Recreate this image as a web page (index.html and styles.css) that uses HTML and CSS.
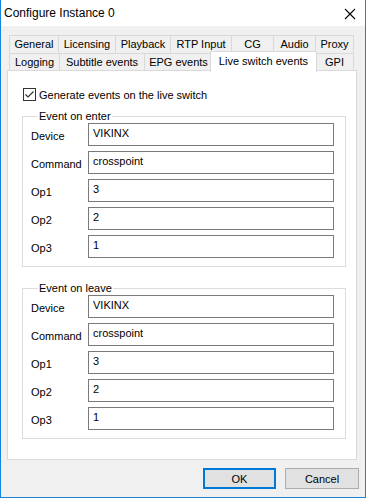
FILE: index.html
```html
<html>
    <head>
        <title>Configure Instance 0</title>
        <link rel="stylesheet" href="styles.css">
    </head>
    <body>
        <div class="window">
            <div class="titlebar">
                <span class="title">Configure Instance 0</span>
                <svg class="close" width="12" height="12" viewBox="0 0 12 12">
                    <path d="M1 1 L11 11 M11 1 L1 11" stroke="#000" stroke-width="1.1" fill="none"/>
                </svg>
            </div>
            <div class="content">
                <div class="tabs">
                    <div class="tabrow first">
                        <div class="tab">General</div>
                        <div class="tab">Licensing</div>
                        <div class="tab">Playback</div>
                        <div class="tab">RTP Input</div>
                        <div class="tab">CG</div>
                        <div class="tab">Audio</div>
                        <div class="tab">Proxy</div>
                    </div>
                    <div class="tabrow second">
                        <div class="tab">Logging</div>
                        <div class="tab">Subtitle events</div>
                        <div class="tab">EPG events</div>
                        <div class="tab selected">Live switch events</div>
                        <div class="tab">GPI</div>
                    </div>
                </div>
                <div class="panel">
                    <label class="check">
                        <svg class="box" width="13" height="13" viewBox="0 0 13 13">
                            <rect x="0.5" y="0.5" width="12" height="12" fill="#fff" stroke="#333"/>
                            <path d="M2.5 6.5 L5 9 L10.5 3.5" stroke="#333" stroke-width="1.2" fill="none"/>
                        </svg>
                        Generate events on the live switch
                    </label>
                    <fieldset class="group">
                        <legend>Event on enter</legend>
                        <div class="field"><span>Device</span><input value="VIKINX"></div>
                        <div class="field"><span>Command</span><input value="crosspoint"></div>
                        <div class="field"><span>Op1</span><input value="3"></div>
                        <div class="field"><span>Op2</span><input value="2"></div>
                        <div class="field"><span>Op3</span><input value="1"></div>
                    </fieldset>
                    <fieldset class="group">
                        <legend>Event on leave</legend>
                        <div class="field"><span>Device</span><input value="VIKINX"></div>
                        <div class="field"><span>Command</span><input value="crosspoint"></div>
                        <div class="field"><span>Op1</span><input value="3"></div>
                        <div class="field"><span>Op2</span><input value="2"></div>
                        <div class="field"><span>Op3</span><input value="1"></div>
                    </fieldset>
                </div>
                <div class="buttons">
                    <button class="default">OK</button>
                    <button>Cancel</button>
                </div>
            </div>
        </div>
    </body>
</html>
```

FILE: styles.css
```css
body
{
    margin: 0;
    font-family: "Liberation Sans", Arial, sans-serif;
    font-size: 11px;
    color: #000000;
}

.window
{
    width: 366px;
    height: 498px;
    box-sizing: border-box;
    border: 1px solid #1883d7;
    border-top: none;
    background-color: #f0f0f0;
    display: flex;
    flex-direction: column;
}

.titlebar
{
    height: 26px;
    flex: none;
    background-color: #ffffff;
    display: flex;
    align-items: center;
    justify-content: space-between;
    padding-left: 3px;
    padding-right: 9px;
}

.title
{
    font-size: 12px;
    margin-top: -1px;
}

.close
{
    margin-top: 1px;
}

.content
{
    padding: 9px 8px 8px 6px;
    display: flex;
    flex-direction: column;
}

.tabs
{
    margin-left: 2px;
}

.tabrow
{
    display: grid;
    height: 18px;
}

.tabrow.first
{
    grid-template-columns: 49px 57px 55px 61px 42px 42px 39px;
}

.tabrow.second
{
    height: 17px;
    grid-template-columns: 50px 85px 68px 103px 39px;
}

.tab
{
    border: 1px solid #d9d9d9;
    border-right: none;
    border-bottom: none;
    background-color: #f0f0f0;
    text-align: center;
    line-height: 17px;
    white-space: nowrap;
}

.tabrow .tab:last-child
{
    border-right: 1px solid #d9d9d9;
}

.tab.selected
{
    position: relative;
    z-index: 1;
    margin: -2px -2px -1px -2px;
    border-right: 1px solid #d9d9d9;
    background-color: #ffffff;
    line-height: 19px;
}

.panel
{
    height: 390px;
    box-sizing: border-box;
    border: 1px solid #d9d9d9;
    background-color: #ffffff;
    padding: 17px 10px 0 14px;
}

.check
{
    display: flex;
    align-items: center;
    gap: 3px;
    height: 13px;
    margin-left: 1px;
}

.group
{
    margin: 9px 0 0 0;
    padding: 0 11px 8px 8px;
    border: 1px solid #dcdcdc;
    display: flex;
    flex-direction: column;
    gap: 5px;
}

.group + .group
{
    margin-top: 15px;
}

.group legend
{
    padding: 0 1px;
    margin-left: 7px;
    margin-bottom: 1px;
}

.field
{
    display: flex;
    align-items: center;
    height: 23px;
}

.field span
{
    width: 57px;
    padding-top: 2px;
}

.field input
{
    flex: 1;
    height: 23px;
    box-sizing: border-box;
    border: 1px solid #7a7a7a;
    padding: 0 4px 3px 4px;
    font-family: "Liberation Sans", Arial, sans-serif;
    font-size: 11px;
    color: #000000;
    outline: none;
}

.buttons
{
    margin-top: 8px;
    margin-right: -2px;
    display: flex;
    justify-content: flex-end;
    gap: 9px;
}

.buttons button
{
    width: 74px;
    height: 21px;
    box-sizing: border-box;
    border: 1px solid #adadad;
    background-color: #e1e1e1;
    font-family: "Liberation Sans", Arial, sans-serif;
    font-size: 11px;
    color: #000000;
    padding: 0;
}

.buttons button.default
{
    width: 73px;
    border: 2px solid #0078d7;
}
```
